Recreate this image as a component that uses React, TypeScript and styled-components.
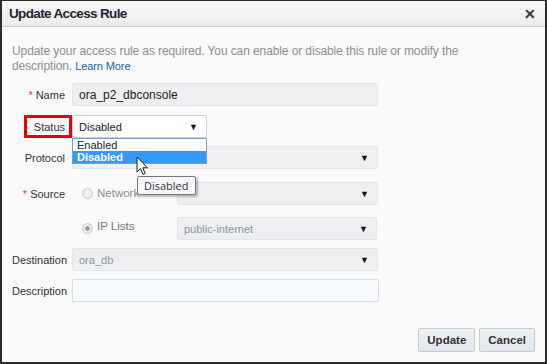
import React from "react";
import styled, { createGlobalStyle } from "styled-components";

const Global = createGlobalStyle`
  html, body { margin: 0; padding: 0; background: #fafafa; }
  body { font-family: "Liberation Sans", Arial, sans-serif; }
  * { box-sizing: border-box; }
`;

const Frame = styled.div`
  width: 547px;
  height: 364px;
  border: 2px solid #2b2b2b;
  border-top-width: 1px;
  background: #fafafa;
  display: flex;
  flex-direction: column;
  position: relative;
  overflow: hidden;
`;

const TitleBar = styled.div`
  height: 26px;
  flex: none;
  display: flex;
  align-items: center;
  justify-content: space-between;
  padding: 0 9px 0 7px;
  background: linear-gradient(#f6f6f6, #ececec);
  border-bottom: 1px solid #c3ced8;
`;

const Title = styled.div`
  font-size: 13.5px;
  font-weight: bold;
  color: #1c2430;
  letter-spacing: -0.65px;
`;

const Close = styled.div`
  font-size: 14px;
  font-weight: bold;
  color: #333;
  line-height: 1;
`;

const Body = styled.div`
  flex: 1;
  display: flex;
  flex-direction: column;
  padding: 17px 10px 10px 10px;
`;

const Intro = styled.div`
  display: flex;
  flex-direction: column;
  font-size: 12px;
  line-height: 15px;
  color: #8e8e8e;
  letter-spacing: -0.1px;
`;

const IntroLine = styled.div`
  white-space: nowrap;
`;

const Link = styled.a`
  color: #1f5ea8;
  font-size: 11px;
  text-decoration: none;
  margin-left: 3px;
`;

const Form = styled.div`
  display: flex;
  flex-direction: column;
  margin-top: 9px;
`;

const Row = styled.div<{ $top: number }>`
  display: flex;
  align-items: center;
  margin-top: ${(p) => p.$top}px;
  position: relative;
`;

const Label = styled.div`
  width: 53px;
  flex: none;
  text-align: right;
  font-size: 11px;
  color: #333;
  white-space: nowrap;
`;

const Req = styled.span`
  color: #d43;
  margin-right: 3px;
`;

const LabelBox = styled.div`
  width: 48px;
  height: 23px;
  margin-left: 12px;
  border: 3px solid #e8000b;
  display: flex;
  align-items: center;
  justify-content: flex-end;
  padding-right: 4px;
  font-size: 11px;
  color: #333;
  flex: none;
`;

const Field = styled.div<{ $w: number; $white?: boolean; $muted?: boolean; $flush?: boolean; $big?: boolean }>`
  width: ${(p) => p.$w}px;
  height: 23px;
  margin-left: ${(p) => (p.$flush ? "0" : "7px")};
  flex: none;
  display: flex;
  align-items: center;
  justify-content: space-between;
  padding: 0 8px 0 6px;
  background: ${(p) => (p.$white ? "#fff" : "#eeeff1")};
  border: 1px solid ${(p) => (p.$white ? "#c9d0d6" : "#e3e5e8")};
  border-radius: 2px;
  font-size: ${(p) => (p.$big ? "12px" : "11px")};
  color: ${(p) => (p.$muted ? "#8a93a0" : "#222")};
`;

const Description = styled.div`
  width: 307px;
  height: 23px;
  margin-left: 7px;
  background: #f8fbfd;
  border: 1px solid #d8dde2;
  border-radius: 2px;
`;

const Arrow = styled.span`
  font-size: 9px;
  color: #111;
`;

const Radio = styled.span<{ $on?: boolean }>`
  width: 11px;
  height: 11px;
  border-radius: 50%;
  border: 1px solid #c8c8c8;
  background: radial-gradient(circle, ${(p) => (p.$on ? "#9a9a9a 0 2px, #ececec 2.5px" : "#f2f2f2 0, #e6e6e6 100%")});
  margin-right: 4px;
  flex: none;
`;

const RadioGroup = styled.div`
  width: 105px;
  margin-left: 7px;
  padding-left: 10px;
  flex: none;
  display: flex;
  align-items: center;
  font-size: 11.5px;
  height: 23px;
`;

const RadioText = styled.span<{ $dark?: boolean; $lift: number }>`
  color: ${(p) => (p.$dark ? "#777" : "#8c8c8c")};
  margin-top: -${(p) => p.$lift}px;
`;

const ListBox = styled.div`
  position: absolute;
  left: 60px;
  top: 23px;
  width: 135px;
  background: #fff;
  border: 1px solid #7f9db9;
  z-index: 5;
  font-size: 11px;
`;

const Option = styled.div<{ $sel?: boolean }>`
  height: 12px;
  line-height: 12px;
  padding-left: 4px;
  color: ${(p) => (p.$sel ? "#fff" : "#222")};
  background: ${(p) => (p.$sel ? "#3399ff" : "transparent")};
  font-weight: ${(p) => (p.$sel ? "bold" : "normal")};
`;

const Tooltip = styled.div`
  position: absolute;
  left: 135px;
  top: 175px;
  padding: 1px 6px 1px 6px;
  background: #f8f8fc;
  border: 1px solid #777;
  border-radius: 2px;
  box-shadow: 2px 2px 2px rgba(0, 0, 0, 0.25);
  font-family: "Open Sans", "Liberation Sans", sans-serif;
  font-size: 11px;
  color: #333;
  z-index: 6;
`;

const Cursor = styled.svg`
  position: absolute;
  left: 134px;
  top: 155px;
  z-index: 7;
`;

const Footer = styled.div`
  margin-top: auto;
  display: flex;
  justify-content: flex-end;
  gap: 4px;
`;

const Button = styled.button`
  height: 24px;
  padding: 0 8px;
  min-width: 55px;
  font-family: "Liberation Sans", Arial, sans-serif;
  font-size: 11.5px;
  font-weight: bold;
  color: #3a2e2e;
  background: linear-gradient(#eef2f5, #e1e7ec);
  border: 1px solid #c2cbd3;
  border-radius: 2px;
`;

export default function App() {
  return (
    <>
      <Global />
      <Frame>
        <TitleBar>
          <Title>Update Access Rule</Title>
          <Close>✕</Close>
        </TitleBar>
        <Body>
          <Intro>
            <IntroLine>
              Update your access rule as required. You can enable or disable this rule or modify the
            </IntroLine>
            <IntroLine>
              <span>description.</span>
              <Link>Learn More</Link>
            </IntroLine>
          </Intro>
          <Form>
            <Row $top={0}>
              <Label>
                <Req>*</Req>Name
              </Label>
              <Field $w={306} $big>ora_p2_dbconsole</Field>
            </Row>
            <Row $top={9}>
              <LabelBox>Status</LabelBox>
              <Field $w={135} $white $flush>
                Disabled
                <Arrow>▼</Arrow>
              </Field>
              <ListBox>
                <Option>Enabled</Option>
                <Option $sel>Disabled</Option>
              </ListBox>
            </Row>
            <Row $top={8}>
              <Label>Protocol</Label>
              <Field $w={306}>
                <span />
                <Arrow>▼</Arrow>
              </Field>
            </Row>
            <Row $top={13}>
              <Label>
                <Req>*</Req>Source
              </Label>
              <RadioGroup>
                <Radio />
                <RadioText $lift={2}>Network</RadioText>
              </RadioGroup>
              <Field $w={201} $flush>
                <span />
                <Arrow>▼</Arrow>
              </Field>
            </Row>
            <Row $top={12}>
              <Label />
              <RadioGroup>
                <Radio $on />
                <RadioText $dark $lift={6}>IP Lists</RadioText>
              </RadioGroup>
              <Field $w={200} $muted $flush>
                public-internet
                <Arrow>▼</Arrow>
              </Field>
            </Row>
            <Row $top={8}>
              <Label>Destination</Label>
              <Field $w={306} $muted>
                ora_db
                <Arrow>▼</Arrow>
              </Field>
            </Row>
            <Row $top={8}>
              <Label>Description</Label>
              <Description />
            </Row>
          </Form>
          <Footer>
            <Button>Update</Button>
            <Button>Cancel</Button>
          </Footer>
        </Body>
        <Cursor width="13" height="20" viewBox="0 0 13 20">
          <path d="M1 1 L1 16 L4.5 12.5 L7 18.5 L9.2 17.6 L6.8 11.8 L11.5 11.8 Z" fill="#fff" stroke="#222" strokeWidth="1" strokeLinejoin="round" />
        </Cursor>
        <Tooltip>Disabled</Tooltip>
      </Frame>
    </>
  );
}
